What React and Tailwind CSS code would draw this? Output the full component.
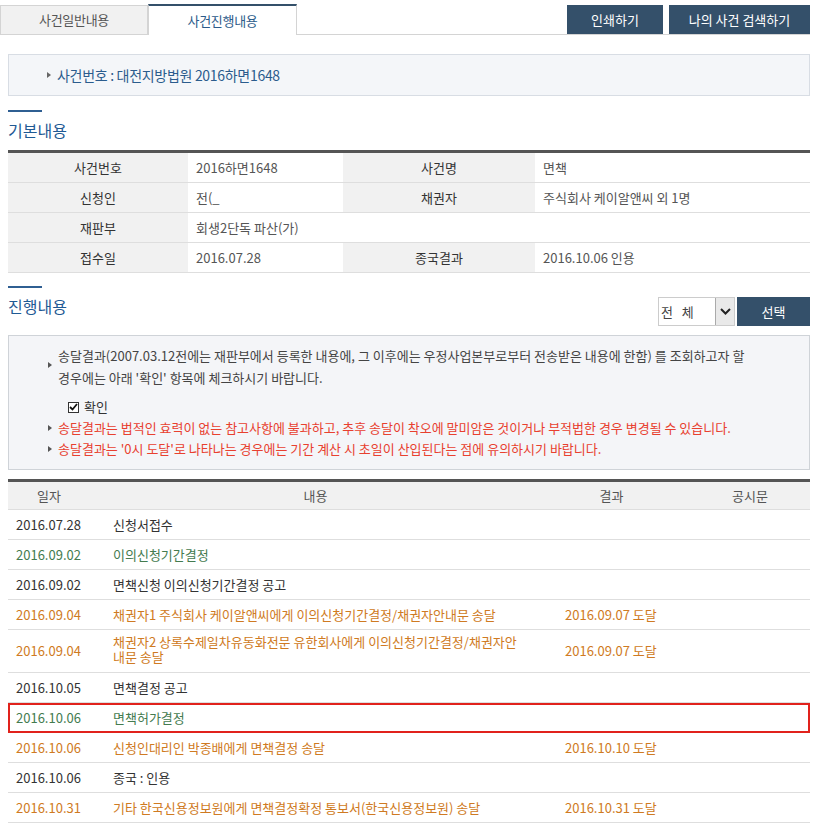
import React from 'react';

const FONT = { fontFamily: '"Malgun Gothic", "Noto Sans CJK KR", "Noto Sans", sans-serif' };

// 작은 삼각형 글머리표
function Bullet({ className = 'text-[#555]' }) {
  return (
    <svg width="4" height="6" viewBox="0 0 4 6" className={`inline-block shrink-0 ${className}`}>
      <path d="M0 0 L4 3 L0 6 Z" fill="currentColor" />
    </svg>
  );
}

function SectionTitle({ children }) {
  return (
    <div>
      <div className="w-[34px] h-[2px] bg-[#2f5f92]" />
      <h2 className="mt-[7px] text-[16px] leading-[22px] text-[#1f5a94]">{children}</h2>
    </div>
  );
}

const basicRows = [
  { l1: '사건번호', v1: '2016하면1648', l2: '사건명', v2: '면책' },
  { l1: '신청인', v1: '전(_', l2: '채권자', v2: '주식회사 케이알앤씨 외 1명' },
  { l1: '재판부', v1: '회생2단독 파산(가)', wide: true },
  { l1: '접수일', v1: '2016.07.28', l2: '종국결과', v2: '2016.10.06 인용' },
];

const BLACK = 'text-[#333]';
const GREEN = 'text-[#447b4f]';
const ORANGE = 'text-[#cf7a22]';

const progress = [
  { date: '2016.07.28', text: '신청서접수', color: BLACK },
  { date: '2016.09.02', text: '이의신청기간결정', color: GREEN },
  { date: '2016.09.02', text: '면책신청 이의신청기간결정 공고', color: BLACK },
  { date: '2016.09.04', text: '채권자1 주식회사 케이알앤씨에게 이의신청기간결정/채권자안내문 송달', result: '2016.09.07 도달', color: ORANGE },
  { date: '2016.09.04', text: ['채권자2 상록수제일차유동화전문 유한회사에게 이의신청기간결정/채권자안', '내문 송달'], result: '2016.09.07 도달', color: ORANGE },
  { date: '2016.10.05', text: '면책결정 공고', color: BLACK },
  { date: '2016.10.06', text: '면책허가결정', color: GREEN, mark: true },
  { date: '2016.10.06', text: '신청인대리인 박종배에게 면책결정 송달', result: '2016.10.10 도달', color: ORANGE },
  { date: '2016.10.06', text: '종국 : 인용', color: BLACK },
  { date: '2016.10.31', text: '기타 한국신용정보원에게 면책결정확정 통보서(한국신용정보원) 송달', result: '2016.10.31 도달', color: ORANGE },
];

export default function App() {
  return (
    <div className="w-[820px] min-h-[828px] bg-white text-[13px] text-[#333]" style={FONT}>
      {/* 탭 + 상단 버튼 */}
      <div className="flex items-end pt-[4px] pr-[10px]">
        <div className="w-[148px] h-[30px] flex items-center justify-center bg-[#f1f1f1] border border-[#d4d4d4] text-[#555] tracking-[-0.3px]">
          사건일반내용
        </div>
        <div className="w-[149px] h-[31px] flex items-center justify-center bg-white border-x border-[#d4d4d4] border-t-2 border-t-[#34506a] text-[#2c5b8a] tracking-[-0.3px]">
          사건진행내용
        </div>
        <div className="flex-1 h-[30px] flex justify-end gap-[6px] border-b border-[#d4d4d4]">
          <button className="w-[96px] h-[29px] bg-[#34506a] text-white">인쇄하기</button>
          <button className="w-[141px] h-[29px] bg-[#34506a] text-white">나의 사건 검색하기</button>
        </div>
      </div>

      <div className="pl-[8px] pr-[10px]">
        {/* 사건번호 안내 박스 */}
        <div className="mt-[19px] h-[42px] flex items-center gap-[6px] pl-[38px] bg-[#f4f6f9] border border-[#d8dde4] text-[#2b5c8d] text-[14px] tracking-[-0.3px]">
          <Bullet className="text-[#666]" />
          <span>사건번호 : 대전지방법원 2016하면1648</span>
        </div>

        {/* 기본내용 */}
        <div className="mt-[14px]">
          <SectionTitle>기본내용</SectionTitle>
        </div>
        <div className="mt-[9px] border-t-[3px] border-[#555]">
          {basicRows.map((r) => (
            <div key={r.l1} className="flex h-[30px] border-b border-[#dedede]">
              <div className="w-[180px] flex items-center justify-center bg-[#f1f1f1] text-[#333]">{r.l1}</div>
              {r.wide ? (
                <div className="flex-1 flex items-center pl-[8px] text-[#555]">{r.v1}</div>
              ) : (
                <>
                  <div className="w-[155px] flex items-center pl-[8px] text-[#555]">{r.v1}</div>
                  <div className="w-[192px] flex items-center justify-center bg-[#f1f1f1] text-[#333]">{r.l2}</div>
                  <div className="flex-1 flex items-center pl-[8px] text-[#555]">{r.v2}</div>
                </>
              )}
            </div>
          ))}
        </div>

        {/* 진행내용 */}
        <div className="mt-[13px] flex items-end justify-between">
          <SectionTitle>진행내용</SectionTitle>
          <div className="flex gap-[2px] -mb-[9px]">
            <div className="w-[77px] h-[29px] flex items-center justify-between border border-[#ccc] bg-white">
              <span className="pl-[2px] text-[#444] tracking-[3px]">전 체</span>
              <span className="w-[19px] h-[27px] flex items-center justify-center bg-[#e9e9e9] border-l border-[#aaa]">
                <svg width="11" height="7" viewBox="0 0 11 7">
                  <path d="M1 1 L5.5 5.5 L10 1" fill="none" stroke="#222" strokeWidth="2" />
                </svg>
              </span>
            </div>
            <button className="w-[73px] h-[29px] bg-[#34506a] text-white">선택</button>
          </div>
        </div>

        <div className="mt-[18px] pt-[9px] pb-[10px] pl-[39px] pr-[20px] bg-[#f4f5f8] border border-[#cfd3d8] text-[#444] leading-[22px]">
          <div className="flex gap-[6px]">
            <span className="pt-[8px]"><Bullet /></span>
            <p>
              송달결과(2007.03.12전에는 재판부에서 등록한 내용에, 그 이후에는 우정사업본부로부터 전송받은 내용에 한함) 를 조회하고자 할
              <br />
              경우에는 아래 '확인' 항목에 체크하시기 바랍니다.
            </p>
          </div>
          <label className="mt-[8px] ml-[20px] flex items-center gap-[5px] h-[20px] text-[#333]">
            <span className="w-[11px] h-[11px] border border-[#333] bg-white flex items-center justify-center">
              <svg width="9" height="8" viewBox="0 0 9 8">
                <path d="M1 4 L3.5 6.5 L8 1" fill="none" stroke="#111" strokeWidth="1.8" />
              </svg>
            </span>
            확인
          </label>
          <div className="flex items-center gap-[6px] text-[#e8402f] leading-[21px]">
            <Bullet />
            <span>송달결과는 법적인 효력이 없는 참고사항에 불과하고, 추후 송달이 착오에 말미암은 것이거나 부적법한 경우 변경될 수 있습니다.</span>
          </div>
          <div className="flex items-center gap-[6px] text-[#e8402f] leading-[21px]">
            <Bullet />
            <span>송달결과는 '0시 도달'로 나타나는 경우에는 기간 계산 시 초일이 산입된다는 점에 유의하시기 바랍니다.</span>
          </div>
        </div>

        {/* 진행내용 목록 */}
        <div className="mt-[9px] border-t-[3px] border-[#555]">
          <div className="grid grid-cols-[98px_449px_135px_120px] h-[28px] items-center bg-[#f1f1f1] border-b border-[#dedede] text-[#555]">
            <div className="text-center pr-[16px]">일자</div>
            <div className="text-center pr-[30px]">내용</div>
            <div className="text-center pr-[22px]">결과</div>
            <div className="text-center">공시문</div>
          </div>
          {progress.map((p, i) => {
            const twoLine = Array.isArray(p.text);
            return (
              <div
                key={i}
                className={`grid grid-cols-[98px_449px_135px_120px] items-center border-b border-[#dedede] ${twoLine ? 'h-[43px]' : 'h-[30px]'} ${p.mark ? 'outline-2 -outline-offset-2 outline-[#e1221c]' : ''} ${p.color}`}
              >
                <div className="pl-[8px]">{p.date}</div>
                <div className="pl-[7px]">
                  {twoLine ? (
                    <div className="leading-[15px] -mt-[5px] whitespace-nowrap">
                      {p.text[0]}
                      <br />
                      {p.text[1]}
                    </div>
                  ) : (
                    p.text
                  )}
                </div>
                <div className="pl-[10px]">{p.result || ''}</div>
                <div />
              </div>
            );
          })}
        </div>
      </div>
    </div>
  );
}
